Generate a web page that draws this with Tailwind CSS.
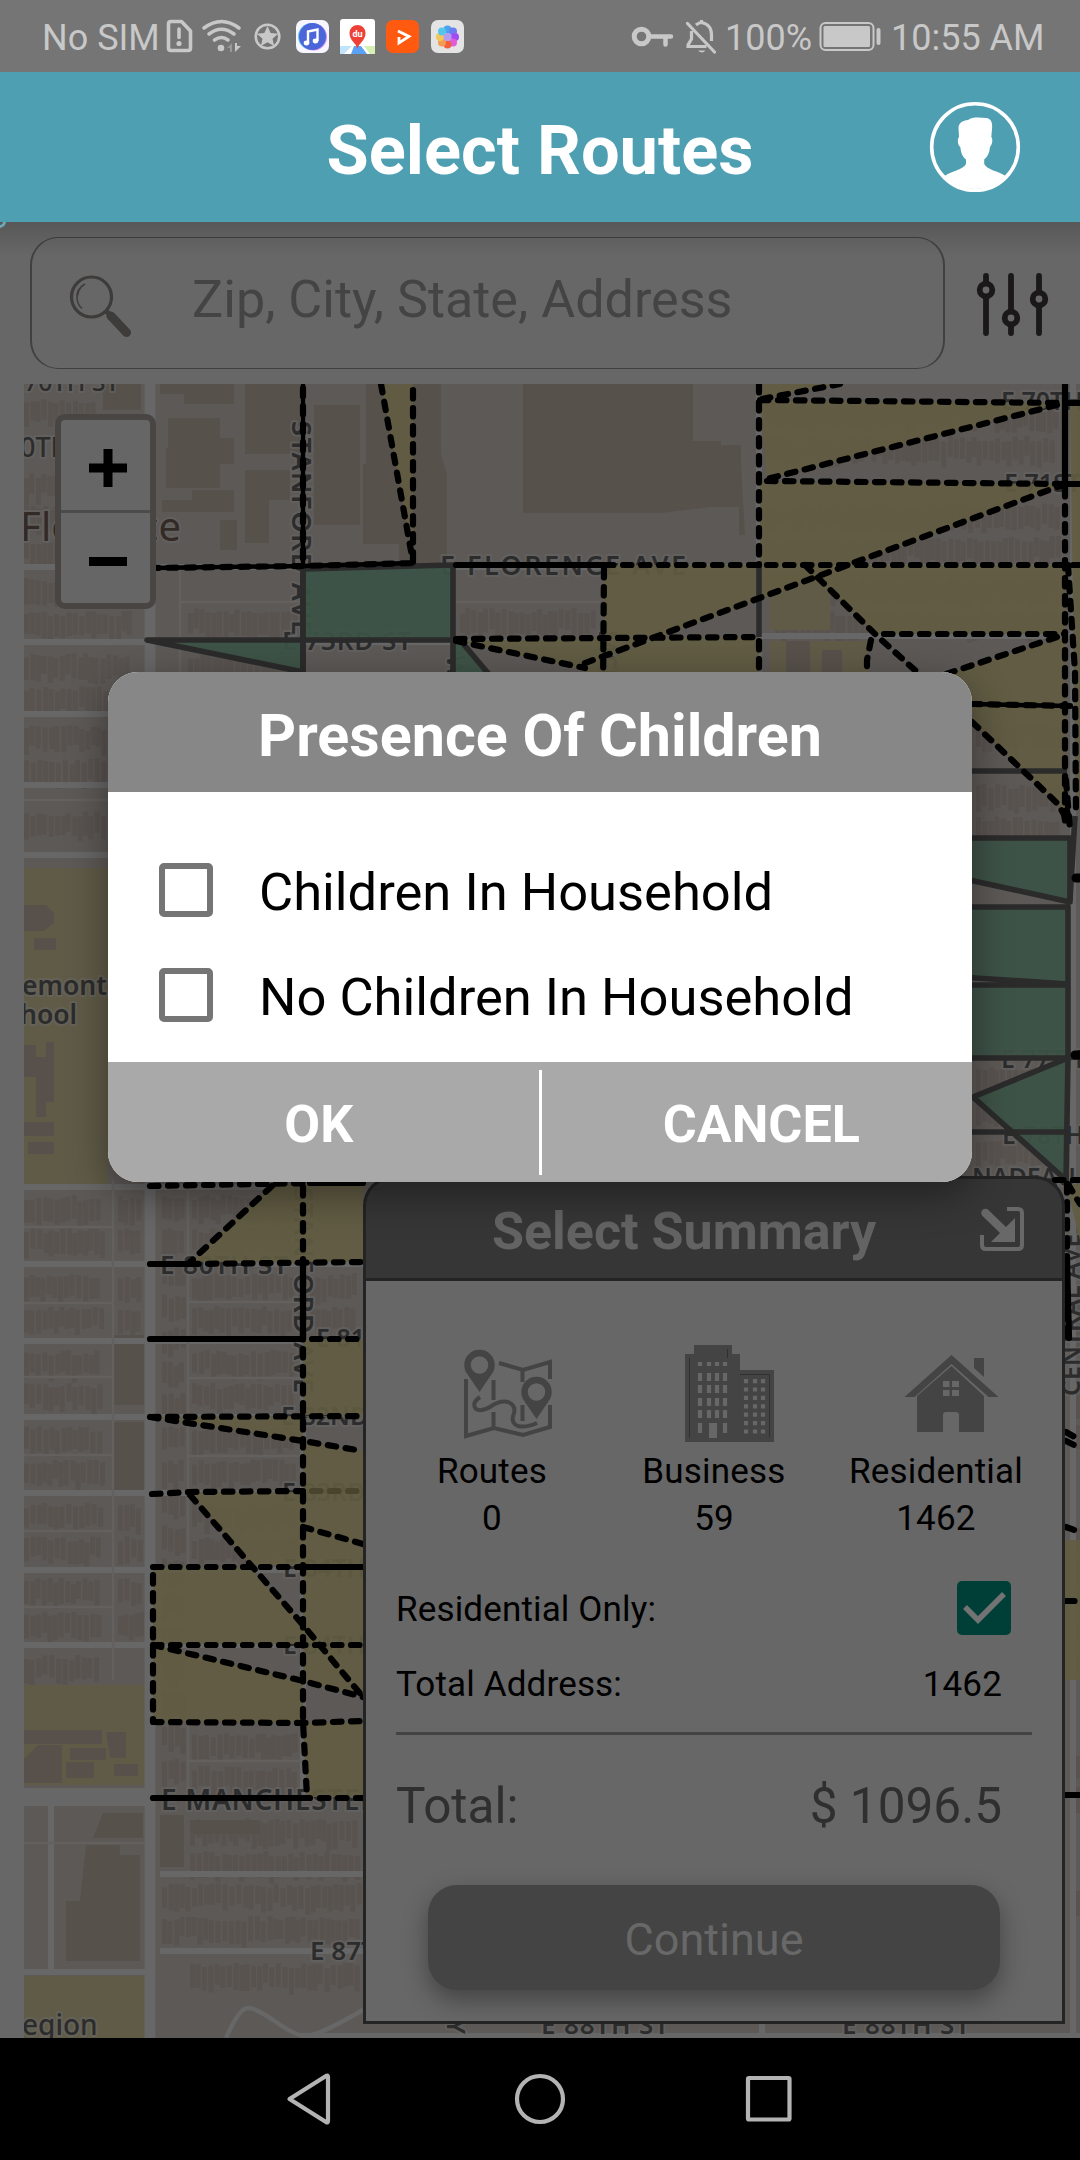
<!DOCTYPE html>
<html lang="en">
<head>
<meta charset="utf-8">
<title>Select Routes</title>
<script src="https://cdn.jsdelivr.net/npm/@tailwindcss/browser@4"></script>
</head>
<body class="w-[1080px] h-[2160px] overflow-hidden bg-black font-['Roboto',sans-serif]">
<div class="relative flex flex-col w-[1080px] h-[2160px]">

  <!-- status bar -->
  <div class="h-[72px] shrink-0 bg-[#757575] text-[#c8c8c8] text-[36px] leading-none flex items-center justify-between pl-[42px] pr-[37px]">
    <div class="flex items-center h-full">
      <span class="w-[120px] pt-[3px] whitespace-nowrap">No SIM</span>
      <svg width="310" height="72" viewBox="162 0 310 72" class="shrink-0">
        <g fill="none" stroke="#c8c8c8" stroke-width="3.6" stroke-linecap="round">
          <path d="M171 21.500h10.500l9 9.500v17q0 2.500-2.500 2.500h-17q-2.500 0-2.500-2.500v-24q0-2.500 2.500-2.500z" stroke-linejoin="round"/>
          <path d="M179 29v8.500"/>
          <path d="M204 28q17.500-13 35 0M209 34q12.500-9.500 25 0M214.500 40q7-5 13.500 0"/>
          <circle cx="267.500" cy="36.500" r="11.800" stroke-width="2.600"/>
        </g>
        <circle cx="179" cy="43.500" r="2.600" fill="#c8c8c8"/>
        <circle cx="221" cy="48" r="3.300" fill="#c8c8c8"/>
        <path d="M227 48l5-5v9h-2v-4z" fill="#999"/><path d="M235 43v9l6-6h-4v-3z" fill="#c8c8c8"/>
        <path d="M267.500 26l3.100 6.900 7.500.8-5.600 5 1.600 7.400-6.600-3.800-6.600 3.800 1.600-7.400-5.600-5 7.500-.8z" fill="#c8c8c8"/>
        <!-- music -->
        <rect x="296" y="20" width="33" height="33" rx="7" fill="#f7f5ff"/>
        <circle cx="311.500" cy="36.500" r="13.500" fill="#63c8f2"/><circle cx="313.500" cy="37" r="13.500" fill="#d58cf0"/>
        <circle cx="312.500" cy="36.500" r="13.500" fill="#4b66d8"/>
        <path d="M308 43V31.500l9.500-2V41" fill="none" stroke="#fff" stroke-width="2.400"/><ellipse cx="306.500" cy="43" rx="2.800" ry="2.400" fill="#fff"/><ellipse cx="315.500" cy="41" rx="2.800" ry="2.400" fill="#fff"/>
        <!-- maps -->
        <rect x="340" y="19" width="35" height="35" rx="3" fill="#fff"/>
        <path d="M340 46l12 0-8 8h-4z" fill="#bfe4fb"/><path d="M354 46h7l6 8h-16z" fill="#5aa2f5"/><path d="M364 46h11v8h-5z" fill="#d5f0b0"/>
        <path d="M357.500 49c-1-6-8-8-8-16a8 8 0 0 1 16 0c0 8-7 10-8 16z" fill="#ee4036"/>
        <text x="357.500" y="36.500" font-size="9" font-weight="700" text-anchor="middle" fill="#fff">du</text>
        <!-- video -->
        <rect x="386" y="20" width="33" height="33" rx="7" fill="#ff5a10"/>
        <path d="M398 31l11 5.500-10 6.500v-6" fill="none" stroke="#fff" stroke-width="2.800"/>
        <!-- gallery -->
        <rect x="431" y="20" width="33" height="33" rx="7" fill="#e4e4e4"/>
        <g>
          <circle cx="447.500" cy="29.500" r="4" fill="#4aa5f0"/><circle cx="453" cy="31.500" r="4" fill="#6b7cf0"/>
          <circle cx="455" cy="37" r="4" fill="#a04cf0"/><circle cx="453" cy="42.500" r="4" fill="#e25ad8"/>
          <circle cx="447.500" cy="44.500" r="4" fill="#f0603c"/><circle cx="442" cy="42.500" r="4" fill="#f59a55"/>
          <circle cx="440" cy="37" r="4" fill="#f2c75a"/><circle cx="442" cy="31.500" r="4" fill="#55c6ea"/>
          <circle cx="447.500" cy="37" r="4" fill="#b59cf0"/>
        </g>
      </svg>
    </div>
    <div class="flex items-center h-full">
      <svg width="96" height="72" viewBox="630 0 96 72" class="shrink-0" fill="none" stroke="#c8c8c8" stroke-width="4.500">
        <circle cx="642.500" cy="36.500" r="7.300" stroke-width="5"/><path d="M651 36.500h21M666.500 37v7.500" stroke-linecap="round"/>
        <g stroke-width="3.200"><path d="M688.500 23.500l27 28.500" stroke-linecap="round"/><path d="M697 25q3-2.500 5.500-2.500 10 2 10 12.500v6M692.500 31v8l-3.500 6v1.500h18.500"/><path d="M702.500 20v3"/></g>
        <path d="M699 50.500h7.500q-3.500 4-7.500 0z" fill="#c8c8c8" stroke="none"/>
      </svg>
      <span class="w-[94px] pt-[3px]">100%</span>
      <svg width="72" height="72" viewBox="820 0 72 72" class="shrink-0">
        <rect x="821.500" y="23" width="53" height="27" rx="5" fill="none" stroke="#c8c8c8" stroke-width="2"/>
        <rect x="824.500" y="26" width="46.500" height="21" rx="1.500" fill="#c8c8c8"/><rect x="877.500" y="28" width="4" height="17" rx="2" fill="#c8c8c8"/>
      </svg>
      <span class="w-[152px] pt-[3px] whitespace-nowrap">10:55 AM</span>
    </div>
  </div>

  <!-- app header -->
  <header class="h-[150px] shrink-0 bg-[#4f9fb3] grid grid-cols-[1fr_auto_1fr] items-center">
    <span></span>
    <h1 class="text-white font-bold text-[68.600px] leading-none pt-[8px]">Select Routes</h1>
    <svg width="92" height="92" viewBox="0 0 92 92" class="justify-self-end mr-[59px]">
      <circle cx="46" cy="46" r="43.300" fill="none" stroke="#fff" stroke-width="3.600"/>
      <path d="M29.500 27c0-5 4-7.500 9.500-8 4-3.300 12-2.500 18-2 6 .8 6.500 5.500 6 11l-.7 8c1.700 2 1.200 7.500-1.300 10-.5 6-2.500 10-5.800 12.500v4.500c3 6 13.800 7 21.300 12A42.500 42.500 0 0 1 15.500 75c7.500-5 18.500-6.500 21.500-12V58.500c-3.500-2.500-5-6.500-5.700-12.500-2.600-2-3.300-7.500-1.300-10z" fill="#fff"/>
    </svg>
  </header>

  <!-- content -->
  <main class="relative h-[1816px] shrink-0 bg-[#676767] overflow-hidden flex flex-col">
    <div class="absolute top-0 left-0 w-full h-[34px] bg-gradient-to-b from-black/15 to-transparent"></div>
    <div class="absolute -left-[7px] -top-[7px] w-[13px] h-[13px] rounded-full border-[3px] border-[#6ba9b8]"></div>
    <div class="h-[162px] shrink-0 flex items-start pt-[15px] pl-[30px]">
      <div class="w-[915px] h-[132px] rounded-[28px] border-x-2 border-y border-[#404040] flex items-center">
        <svg width="70" height="70" viewBox="66 272 70 70" class="ml-[34px] mt-[4px]" fill="none" stroke="#3e3c3a">
          <circle cx="91.500" cy="299" r="20" stroke-width="3.200"/><path d="M85 286q-9 5-8 14.500 1 7 5 10M81 289.500q-3 3-3.500 8" stroke-width="1.500"/>
          <path d="M111 318l15.500 16.500" stroke-width="9" stroke-linecap="round"/><path d="M106 313l5 5" stroke-width="5"/>
        </svg>
        <span class="ml-[56px] pb-[6px] text-[52.100px] leading-none text-[#444] whitespace-nowrap">Zip, City, State, Address</span>
      </div>
      <svg width="80" height="72" viewBox="972 268 80 72" class="ml-[27px] mt-[31px]" fill="none" stroke="#1b1819" stroke-width="5.800" stroke-linecap="round">
        <path d="M986 276v6M986 299v34M1011 276v33M1011 326v7M1039 276v15M1039 308v25"/>
        <circle cx="986" cy="290" r="6.300"/><circle cx="1011" cy="318" r="6.300"/><circle cx="1039" cy="299" r="6.300"/>
      </svg>
    </div>

    <!-- map: user units are screen pixels -->
    <svg class="ml-[24px] shrink-0" width="1056" height="1654" viewBox="24 384 1056 1654" font-family="'Noto Sans',sans-serif">
      <rect x="24" y="384" width="1056" height="1654" fill="#5d5956"/>
      <g id="houses" fill="#554e49" opacity=".5"></g>
      <g fill="#57514c">
        <path d="M160 384h74v20h-50v-10h-24zM168 418h52v20h14v26h-14v24h-54v-40h2zM245 384h60v70h-60zM245 470h45v30h-45zM162 500h30v-10h42v22h-72zM314 405h46v120h-46zM366 384h75v70l6 20v90h-48v-20h-36v-80h3zM523 384h170v57h28v4h20v20l4 70h-6v-28h-28l-50 6H523zM103 384h38v26h-38zM220 520h17v30h-17zM245 495h24v48h-24z"/>
        <path d="M114 1335h30v70h-30M114 1422h30v68h-30M86 1845h34v10h20v106H66v-60h14zM103 1813h40v25h-50zM160 1815h24v52h-24M190 1820h70v14h-70z"/>
      </g>
      <g fill="#605b47">
        <rect x="24" y="868" width="84" height="316"/><rect x="24" y="1685" width="121" height="100"/><rect x="24" y="1976" width="121" height="62"/><path d="M770 570h60v60h-60zM770 641h98v40h-98z"/>
      </g>
      <g fill="#58514b">
        <path d="M24 905h22l8 8v10l-10 8H24zM34 938h22v12H34zM24 1045h12v12h10v60h-10v-40H24zM46 1042h8v60h-8zM24 1122h30v14H24zM28 1142h26v12H28zM24 1730h78v14H24zM70 1748h36v12H70zM66 1762h28v16H66zM38 1745h24v38H24v-24zM106 1732h20v26h-16zM114 1764h24v12h-24zM786 641h24v40h-24zM822 650h20v30h-20z"/>
      </g>
      <!-- streets -->
      <g fill="none" stroke="#676767">
        <path d="M150 384V2038" stroke-width="11"/>
        <path d="M24 567H1080M24 642H759M761 636H1070M24 714H108M24 785H108M24 855H108M24 1187H363M24 1264H363M24 1341H303M24 1417H303M24 1493H303M24 1570H303M24 1645H300M160 1874H363M160 1951H363M24 1972H150M51 1803V1972M1073 384V2038M303 384V1800M759 384V690M300 2036H1080M762 1990V2038" stroke-width="6"/>
        <path d="M24 1797H150" stroke-width="18"/>
        <path d="M226 2038q13-30 22-30 8 0 28 14t30 14q12 0 57-26" stroke-width="4.500"/>
        <path d="M113 1180V1680M188 1180V1790M24 1227H112M24 1303H112M24 1377H112M24 1455H112M24 1531H112M24 1607H112M188 1302H303M188 1378H303M188 1456H303M188 1761H303M24 800H108M180 567V672M180 602H303M453 602H600M24 1843H145" stroke-width="2.500" stroke="#63605e"/>
      </g>
      <!-- street names -->
      <g font-size="25" font-weight="600" fill="#2c2c2c" stroke="#686868" stroke-width="4" stroke-opacity=".55" paint-order="stroke" stroke-linejoin="round">
        <text x="24" y="391" font-weight="500">70TH ST</text><text x="20" y="457" font-size="27" font-weight="500">0TH</text>
        <text x="440" y="575" font-size="27" textLength="246">E FLORENCE AVE</text>
        <text x="282" y="650" textLength="130" font-size="26">E 73RD ST</text>
        <text x="1001" y="410">E 70TH</text><text x="1004" y="492">E 71ST</text><text x="1001" y="1068">E 77TH</text><text x="1002" y="1144">E 78TH</text><text x="972" y="1186" textLength="104">NADEAU</text>
        <text transform="translate(292 421) rotate(90)" font-size="27" textLength="214">STANFORD AVE</text>
        <text transform="translate(294 1187) rotate(90)" font-size="27" textLength="206">STANFORD AVE</text>
        <text transform="translate(447 655) rotate(90)">WADSWORTH</text><text transform="translate(599 630) rotate(90)">MCK</text>
        <text transform="translate(1080 1396) rotate(-90)">CENTRAL AVE</text>
        <text x="160" y="1274" font-size="26" textLength="128">E 80TH ST</text><text x="316" y="1347">E 81ST</text><text x="281" y="1425">E 82ND</text><text x="282" y="1501">E 83RD</text><text x="283" y="1577">E 84TH</text><text x="283" y="1654">E 84TH</text>
        <text x="161" y="1810" font-size="28" textLength="262">E MANCHESTER AV</text>
        <text x="310" y="1960" font-size="26">E 87TH ST</text><text x="541" y="2034" font-size="26" textLength="128">E 88TH ST</text><text x="842" y="2034" font-size="26" textLength="128">E 88TH ST</text>
        <text transform="translate(447 2034) rotate(90)" text-anchor="end">WAY</text>
        <text x="20" y="541" font-size="40" font-weight="400" fill="#332a26" textLength="161">Florence</text>
        <text x="22" y="995" font-size="26.500">emont</text><text x="20" y="1024" font-size="26.500">hool</text><text x="22" y="2035" font-size="28" font-weight="500">egion</text>
      </g>
      <!-- route areas -->
      <g fill="#625c41" fill-opacity=".9">
        <path d="M381 384H413V560zM759 384H840L760 399zM760 400L1065 403 767 479zM760 481L1065 484 852 565H760zM604 565H852L661 637 604 657zM585 668L661 637H759V690H570zM456 641L604 638V665L575 668zM805 565H1065V634H876zM1065 637V705H972L946 674zM972 706H1065V812L972 722zM1070 403H1080V810H1076zM1070 1184H1080V1240L1070 1200z"/>
        <path d="M272 1184H363V1262H190zM303 1339H363V1415H303zM148 1417L303 1416H363V1417H303V1441zM303 1441L363 1451V1697L303 1627zM190 1492H303V1565H250zM153 1567H250L303 1625V1644H153zM303 1567H363V1644H318zM303 1627L363 1697 303 1681zM153 1645L303 1681V1722H153zM303 1722H363V1797H307zM1065 1540H1080V1680H1065z"/>
      </g>
      <g fill="#3d5346" fill-opacity=".94" stroke="#2b2b2b" stroke-width="5.600" stroke-linejoin="round">
        <path d="M303 569L453 565V640H303zM147 640H303V672zM453 640H460L487 672 500 690H453z"/>
        <path d="M960 838H1070V902L960 878zM960 907H1068V984L960 977zM960 985H1068V1058H960zM1068 1058L973 1097 1066 1180z"/>
        <path d="M303 566V680M960 771H1067M960 1132H1070M1075 816L1070 900M759 565V637" fill="none"/>
      </g>
      <!-- route borders -->
      <g fill="none" stroke="#000" stroke-width="6.200" stroke-linecap="round">
        <path d="M456 565H605M1065 384V484M150 1264H190M150 1339H303M303 1567H363M153 1798H310M1065 1795H1080M310 1183H363M1067 1262L1069 1338M1065 403H1080M1065 484H1080M303 1262V1339"/>
        <path d="M303 384V565M150 568L303 566 413 563M972 704L1070 706" stroke-width="4.500"/>
        <g stroke-dasharray="8.500 9.500">
          <path d="M381 384L413 562M413 390V562M150 568L303 566 413 563M303 388V565M762 399L840 384M760 400L1065 403M1057 405L767 479M767 481L1065 484M1065 484L580 665M605 565H1080M604 569L603 690M805 565L876 635 917 672M884 634H1065M871 640L867 660V690M1057 637L946 674M759 384V565M759 641V690M1065 488V830M1068 565L1075 672 1076 815M972 722L1058 804 1066 818M972 704L1070 706M456 639L759 637M456 641L585 668M1066 780L1070 830"/>
          <path d="M150 1186L310 1183M272 1186L190 1262M190 1264L363 1262M303 1187V1722L307 1797M312 1339H363M150 1417L363 1416M150 1417L303 1441 363 1451M152 1494L190 1492 303 1491M190 1495L303 1625 363 1697M303 1527L363 1544M153 1567H303M153 1575V1722M153 1645H363M153 1645L303 1681 363 1697M153 1722L303 1723 363 1721M320 1798H363M1067 1184V1340M1055 1180H1080M1068 1184L1080 1204M1066 1432L1080 1440M1066 1441L1080 1448M1066 1527L1080 1532M1066 1601H1080"/>
          <path d="M312 1491H363" stroke="#4a442f"/>
        </g>
        <path d="M1066 812v6M1076 878h4M1075 1055h5" stroke-width="9"/>
      </g>
    </svg>

    <!-- map zoom buttons -->
    <div class="absolute left-[55px] top-[192px] w-[101px] h-[195px] rounded-[10px] border-[6px] border-[#484542] bg-[#666] flex flex-col">
      <div class="flex-1 flex items-center justify-center border-b-[3px] border-[#4c4c4c]"><svg width="38" height="38" viewBox="0 0 38 38" class="mt-[6px] ml-[4px]"><path d="M0 19h38M19 0v38" stroke="#000" stroke-width="9"/></svg></div>
      <div class="flex-1 flex items-center justify-center"><svg width="38" height="9" viewBox="0 0 38 9" class="mt-[6px] ml-[4px]"><path d="M0 4.500h38" stroke="#000" stroke-width="9"/></svg></div>
    </div>

    <!-- summary panel -->
    <section class="absolute left-[363px] top-[954px] w-[702px] h-[848px] flex flex-col">
      <div class="h-[105px] shrink-0 rounded-t-[30px] border-[3px] border-[#242424] bg-[#363636] flex items-center justify-end">
        <h2 class="flex-1 pl-[126px] pt-[6px] text-[52px] leading-none font-bold text-[#636363] whitespace-nowrap">Select Summary</h2>
        <svg width="46" height="46" viewBox="0 0 46 46" class="mr-[37px]" fill="none" stroke="#686868" stroke-width="4">
          <path d="M28 3h11q4 0 4 4v32q0 4-4 4H7q-4 0-4-4V29"/><path d="M6.500 7L24 24" stroke-width="8.500" stroke-linecap="round"/><path d="M36 12v24H12l6-6 13-13z" fill="#686868" stroke="none"/>
        </svg>
      </div>
      <div class="flex-1 border-[3px] border-t-0 border-[#242424] bg-[#676767] px-[15px] flex flex-col text-black text-[35px] leading-[47px]">
        <div class="grid grid-cols-3 h-[266px] shrink-0 pt-[62px] text-center tracking-[0.2px]">
          <div class="flex flex-col items-center">
            <svg width="90" height="100" viewBox="463 1343 90 100" class="ml-[32px]" fill="none" stroke="#444" stroke-width="4">
              <path d="M466 1379v57l28-8 29 7 27-8v-22M499 1363l24 7 27-8v17M493.500 1380v20M493.500 1412v16M522.500 1370v12M522.500 1405v16"/>
              <path d="M480 1397q-9 6-4 12 5 3 14-2 10-7 18-5 8 3 6 11-4 10 4 13 8 2 19-3" stroke-width="4"/>
              <circle cx="479.500" cy="1365" r="12" stroke-width="6.500"/><path d="M468 1375h23l-11.500 17z" fill="#444" stroke="none"/>
              <circle cx="536.500" cy="1392" r="12" stroke-width="6.500"/><path d="M525 1402h23l-11.500 17z" fill="#444" stroke="none"/>
            </svg>
            <span class="pt-[5px]">Routes</span><span>0</span>
          </div>
          <div class="flex flex-col items-center">
            <svg width="90" height="100" viewBox="684 1343 90 100" class="ml-[30px]">
              <path d="M685 1354h9v-9h38v9h8v16h34v72h-89z" fill="#444"/>
              <path d="M689.500 1358v80M727.500 1349v9M740 1374.500h29.500v63" stroke="#303030" fill="none"/>
              <g fill="none" stroke="#676767" stroke-width="4.200"><path d="M700 1362v4M709 1362v4M717 1362v4M725 1362v4" /><path d="M700 1373v8M700 1385v8M700 1398v8M700 1410v8M700 1423v10M709 1373v8M709 1385v8M709 1398v8M709 1410v8M717 1373v8M717 1385v8M717 1398v8M717 1410v8M725 1373v8M725 1385v8M725 1398v8M725 1410v8M725 1423v10"/>
              <path d="M746 1379v56M755 1379v56M763 1379v56" stroke-dasharray="4.200 4.200"/><path d="M713 1423v15" stroke-width="8"/></g>
            </svg>
            <span class="pt-[5px]">Business</span><span>59</span>
          </div>
          <div class="flex flex-col items-center">
            <svg width="96" height="100" viewBox="903 1343 96 100" class="ml-[30px]">
              <path d="M904.500 1397l47-42 47 42h-10l-37-33-37 33zM917 1396l34.500-30 32.500 30v36h-25v-17q0-3-3-3h-10q-3 0-3 3v17h-26zM974 1358h10v19l-10-9z" fill="#444"/>
              <path d="M943 1381h6.500v6H943zM952 1381h7v6h-7zM943 1390h6.500v6H943zM952 1390h7v6h-7z" fill="#676767"/>
            </svg>
            <span class="pt-[5px]">Residential</span><span>1462</span>
          </div>
        </div>
        <div class="mx-[15px] h-[75px] mt-[23px] flex items-center justify-between pr-[21px] text-[35px] tracking-[0.15px]">
          <span class="pt-[3px]">Residential Only:</span>
          <span class="w-[54px] h-[54px] rounded-[5px] bg-[#003f37]"><svg width="54" height="54" viewBox="0 0 54 54"><path d="M8 26l13 13 26-26" fill="none" stroke="#737373" stroke-width="5.500"/></svg></span>
        </div>
        <div class="mx-[15px] h-[75px] pt-[3px] flex items-center justify-between pr-[30px] text-[35px] tracking-[0.15px]"><span>Total Address:</span><span>1462</span></div>
        <div class="mx-[15px] mt-[12px] h-[3px] shrink-0 bg-[#434343]"></div>
        <div class="mx-[15px] h-[142px] flex items-center justify-between pr-[30px] text-[49.500px] text-[#2f2f2f]"><span>Total:</span><span>$ 1096.5</span></div>
        <div class="mx-[47px] mt-[8px] h-[105px] shrink-0 rounded-[29px] bg-[#444] shadow-[0_10px_24px_rgba(0,0,0,0.35)] flex items-center justify-center text-[45px] text-[#686868] pt-[3px]">Continue</div>
      </div>
    </section>
  </main>

  <!-- navigation bar -->
  <nav class="h-[122px] shrink-0 bg-black flex justify-center">
    <svg width="560" height="122" viewBox="260 2038 560 122" fill="none" stroke="#b3b3b3" stroke-width="4.200" stroke-linejoin="round">
      <path d="M289.500 2099L326 2076q2-1 2 1v44q0 2-2 1z"/><circle cx="540" cy="2099" r="23"/><rect x="748" y="2078" width="41.500" height="41.500" rx="1"/>
    </svg>
  </nav>

  <!-- dialog -->
  <div class="absolute left-[108px] top-[672px] w-[864px] h-[510px] rounded-[30px] overflow-hidden bg-white flex flex-col shadow-[0_12px_40px_rgba(0,0,0,0.4)]">
    <div class="h-[120px] shrink-0 bg-[#878787] text-white font-bold text-[59.200px] leading-none flex items-center justify-center pt-[8px]">Presence Of Children</div>
    <div class="h-[270px] shrink-0 pt-[71px] pl-[51px] flex flex-col gap-[51px] text-black text-[52.500px] leading-none">
      <div class="flex items-center gap-[46px] h-[54px]"><span class="w-[54px] h-[54px] shrink-0 rounded-[5px] border-[6px] border-[#757575]"></span><span class="pt-[5px] whitespace-nowrap">Children In Household</span></div>
      <div class="flex items-center gap-[46px] h-[54px]"><span class="w-[54px] h-[54px] shrink-0 rounded-[5px] border-[6px] border-[#757575]"></span><span class="pt-[5px] whitespace-nowrap">No Children In Household</span></div>
    </div>
    <div class="flex-1 bg-[#a9a9a9] text-white font-bold text-[52px] leading-none flex items-center">
      <div class="flex-1 text-center pt-[6px] pr-[9px]">OK</div>
      <div class="w-[3px] h-[105px] bg-white"></div>
      <div class="flex-1 text-center pt-[6px] pl-[9px]">CANCEL</div>
    </div>
  </div>
</div>
<script>
// Building footprints: rows of small lots inside every city block.
(function () {
  let seed = 7;
  const rnd = () => (seed = (seed * 16807) % 2147483647) / 2147483647;
  const rows = [
    [24, 575, 110, 60], [24, 650, 110, 58], [24, 722, 82, 58], [24, 808, 82, 42], [24, 395, 75, 40], [24, 470, 100, 90],
    [188, 605, 110, 30], [188, 650, 110, 22], [460, 605, 140, 28], [765, 400, 295, 76], [765, 500, 295, 60], [775, 575, 290, 56], [976, 780, 88, 52], [976, 720, 88, 45], [976, 1062, 88, 66], [976, 1136, 88, 40],
    [24, 1192, 80, 66], [24, 1270, 80, 66], [24, 1347, 80, 66], [24, 1423, 80, 64], [24, 1500, 80, 64], [24, 1575, 80, 64], [24, 1652, 80, 30],
    [118, 1192, 26, 66], [118, 1270, 26, 66], [118, 1500, 26, 64], [118, 1575, 26, 64],
    [162, 1192, 24, 595], [192, 1192, 106, 66], [192, 1270, 106, 66], [192, 1347, 106, 66], [192, 1423, 106, 64], [192, 1500, 106, 64], [192, 1730, 106, 56],
    [310, 1270, 50, 66], [190, 1815, 170, 52], [162, 1880, 200, 66], [190, 1960, 170, 40], [1070, 1190, 10, 840]
  ];
  let d = '';
  for (const [x, y, w, h] of rows)
    for (let b = y + 3; b + 18 <= y + h + 4; b += 33)
      for (let a = x; a < x + w - 4; a += 5 + rnd() * 2) {
        const j = rnd() * 6, k = 18 + rnd() * 9;
        d += `M${a.toFixed(1)} ${(b + j).toFixed(1)}h5v${k.toFixed(1)}h-5z`;
      }
  const p = document.createElementNS('http://www.w3.org/2000/svg', 'path');
  p.setAttribute('d', d);
  document.getElementById('houses').appendChild(p);
})();
</script>
</body>
</html>
